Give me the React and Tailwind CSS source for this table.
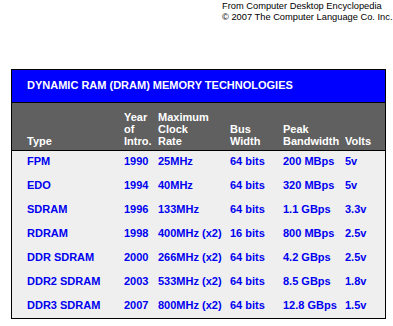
import React from "react";

const rows = [
  ["FPM", "1990", "25MHz", "64 bits", "200 MBps", "5v"],
  ["EDO", "1994", "40MHz", "64 bits", "320 MBps", "5v"],
  ["SDRAM", "1996", "133MHz", "64 bits", "1.1 GBps", "3.3v"],
  ["RDRAM", "1998", "400MHz (x2)", "16 bits", "800 MBps", "2.5v"],
  ["DDR SDRAM", "2000", "266MHz (x2)", "64 bits", "4.2 GBps", "2.5v"],
  ["DDR2 SDRAM", "2003", "533MHz (x2)", "64 bits", "8.5 GBps", "1.8v"],
  ["DDR3 SDRAM", "2007", "800MHz (x2)", "64 bits", "12.8 GBps", "1.5v"],
];

const grid = "grid grid-cols-[97px_34px_72px_53px_62px_1fr] pl-[15px]";

export default function App() {
  return (
    <div
      className="w-[393px] h-[326px] bg-white overflow-hidden"
      style={{ fontFamily: '"Liberation Sans", Arial, sans-serif' }}
    >
      <div className="h-[69px] pt-[1px] pl-[222px] text-[9.3px] leading-[11px] text-black whitespace-nowrap">
        <div>From Computer Desktop Encyclopedia</div>
        <div>© 2007 The Computer Language Co. Inc.</div>
      </div>
      <div className="ml-[11px] w-[375px] border border-black font-bold text-[11px]">
        <div className="h-[33px] bg-[#0000ff] text-white flex items-center pl-[15px] pb-[1px] border-b border-black whitespace-nowrap">
          DYNAMIC RAM (DRAM) MEMORY TECHNOLOGIES
        </div>
        <div className={`${grid} bg-[#606060] text-white leading-[12px] pt-[8px] pb-[3px] items-end border-b border-black whitespace-nowrap`}>
          <div>Type</div>
          <div>
            Year
            <br />
            of
            <br />
            Intro.
          </div>
          <div>
            Maximum
            <br />
            Clock
            <br />
            Rate
          </div>
          <div>
            Bus
            <br />
            Width
          </div>
          <div>
            Peak
            <br />
            Bandwidth
          </div>
          <div>Volts</div>
        </div>
        <div className="bg-[#efefef] text-[#0000f0] leading-[13px] pt-[4px] pb-[6px] flex flex-col gap-[11px]">
          {rows.map((r) => (
            <div key={r[0]} className={`${grid} whitespace-nowrap`}>
              {r.map((c, i) => (
                <div key={i}>{c}</div>
              ))}
            </div>
          ))}
        </div>
      </div>
    </div>
  );
}
